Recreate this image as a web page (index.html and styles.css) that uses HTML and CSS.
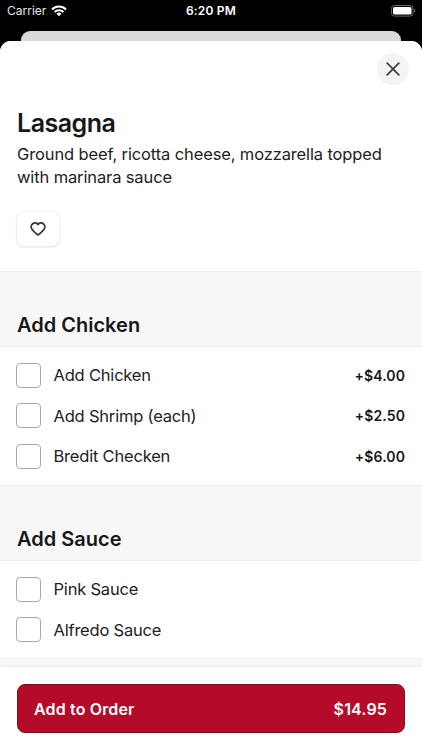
FILE: index.html
```html
<!DOCTYPE html>
<html lang="en">
<head>
<meta charset="utf-8">
<title>Lasagna</title>
<link rel="stylesheet" href="styles.css">
</head>
<body>
<div class="phone">
  <header class="status">
    <div class="carrier"><span>Carrier</span>
      <svg width="16" height="12" viewBox="0 0 16 12"><g fill="none" stroke="#fff" stroke-width="2.1"><path d="M1 4.4a10 10 0 0 1 14 0"/><path d="M3.6 7.1a6.3 6.3 0 0 1 8.8 0"/></g><path fill="#fff" d="M8 11.3 5.5 8.8a3.6 3.6 0 0 1 5 0z"/></svg>
    </div>
    <div class="time">6:20 PM</div>
    <svg class="battery" width="25" height="12" viewBox="0 0 25 12"><rect x=".5" y=".5" width="21.5" height="10.6" rx="3" fill="none" stroke="#666"/><rect x="2" y="2" width="18.5" height="7.6" rx="1.6" fill="#fff"/><path d="M23.2 4v3.6c1.5-.6 1.5-3 0-3.6z" fill="#777"/></svg>
  </header>
  <div class="back-sheet"></div>
  <main class="sheet">
    <section class="intro">
      <button class="close" aria-label="Close"><svg width="14" height="14" viewBox="0 0 14 14"><path d="M1.2 1.2l11.6 11.6M12.8 1.2L1.2 12.8" fill="none" stroke="#404040" stroke-width="1.8" stroke-linecap="round"/></svg></button>
      <h1>Lasagna</h1>
      <p>Ground beef, ricotta cheese, mozzarella topped with marinara sauce</p>
      <button class="fav" aria-label="Favorite"><svg width="16" height="14" viewBox="0 0 16 14"><path d="M8 2.500C6.700.7 4.300.4 2.700 1.700.9 3.100.7 5.500 2 7.200c1.200 1.700 3.300 3.800 6 5.700 2.700-1.900 4.800-4 6-5.700 1.300-1.700 1.100-4.100-.7-5.500C11.700.4 9.300.7 8 2.500z" fill="none" stroke="#3a3a3a" stroke-width="1.8" stroke-linejoin="round"/></svg></button>
    </section>
    <h2>Add Chicken</h2>
    <ul class="options">
      <li><i class="box"></i><span>Add Chicken</span><b>+$4.00</b></li>
      <li><i class="box"></i><span>Add Shrimp (each)</span><b>+$2.50</b></li>
      <li><i class="box"></i><span>Bredit Checken</span><b>+$6.00</b></li>
    </ul>
    <h2>Add Sauce</h2>
    <ul class="options">
      <li><i class="box"></i><span>Pink Sauce</span></li>
      <li><i class="box"></i><span>Alfredo Sauce</span></li>
    </ul>
  </main>
  <footer class="footer">
    <button class="order"><span>Add to Order</span><span>$14.95</span></button>
  </footer>
</div>
</body>
</html>
```
FILE: styles.css
```css
* { box-sizing: border-box; }
body { margin: 0; background: #000; font-family: Inter, "Liberation Sans", sans-serif; color: #171717; }
button { border: 0; padding: 0; font-family: inherit; display: flex; align-items: center; justify-content: center; }
.phone { width: 422px; height: 750px; display: flex; flex-direction: column; overflow: hidden; }
.status { height: 31px; flex: none; padding: 4px 6px 13px 7px; display: grid; grid-template-columns: 1fr auto 1fr; align-items: center; color: #fff; }
.carrier { display: flex; align-items: center; gap: 4.5px; font-size: 12px; line-height: 14px; color: #e6e6e6; }
.carrier svg { margin-top: -1px; }
.time { font-size: 12px; line-height: 14px; font-weight: 600; letter-spacing: .2px; margin-right: 1px; }
.battery { justify-self: end; margin-top: -1px; }
.back-sheet { height: 10px; flex: none; margin: 0 21px; border-radius: 9px 9px 0 0; background: #dadada; }
.sheet { flex: 1; min-height: 0; overflow: hidden; border-radius: 11px 11px 0 0; background: #f7f7f7; }
.intro { height: 231px; padding: 12px 13px 0 17px; background: #fff; border-bottom: 1px solid #eee; }
.close { width: 32px; height: 32px; margin-left: auto; border-radius: 50%; background: #f4f4f4; }
h1 { margin: 22px 0 0; font-size: 25px; line-height: 32px; font-weight: 600; letter-spacing: -.5px; }
p { margin: 4px 0 0; font-size: 16.5px; line-height: 22.5px; letter-spacing: -.13px; color: #222; }
.fav { width: 42px; height: 34px; margin-top: 24px; border-radius: 7px; background: #fff; box-shadow: 0 0 2px 1px #efefef, 0 1px 2px #d0d0d0; }
h2 { height: 74px; margin: 0; padding: 39px 17px 0; font-size: 20px; line-height: 28px; font-weight: 600; }
.options { margin: 0; padding: 8px 17px 8px 16px; list-style: none; background: #fff; border-top: 1px solid #eee; border-bottom: 1px solid #eee; }
.options li { height: 40.6px; display: flex; align-items: center; font-size: 16.5px; letter-spacing: -.2px; color: #222; }
.box { width: 25px; height: 25px; margin: 0 12.5px 0 0; border: 1px solid #aaa; border-radius: 4px; background: #fff; }
.options b { margin-left: auto; font-size: 14px; font-weight: 600; letter-spacing: .1px; color: #171717; }
.footer { height: 83px; flex: none; padding: 17px 17px 0; background: #fff; box-shadow: 0 0 4px rgba(0,0,0,.07); position: relative; }
.order { width: 100%; height: 49px; padding: 0 17px 0 16px; justify-content: space-between; border: 1px solid #7a1024; border-radius: 8px; background: #b40b28; color: #fff; font-size: 16px; font-weight: 600; letter-spacing: .15px; }
```
